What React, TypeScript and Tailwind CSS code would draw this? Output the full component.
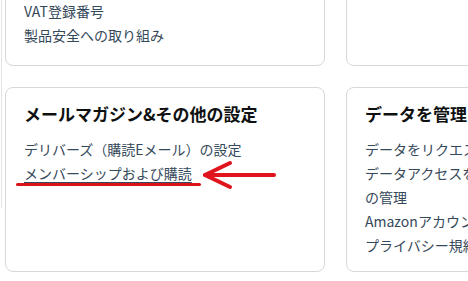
const font = {
  fontFamily: '"Noto Sans CJK JP", "Noto Sans", sans-serif',
};

const Card = ({
  title,
  items,
  className,
  children,
}: {
  title?: string;
  items: string[];
  className?: string;
  children?: React.ReactNode;
}) => {
  return (
    <div
      className={
        "relative rounded-lg border border-[#d5d9d9] bg-white px-[18px] " +
        (className ?? "")
      }
    >
      {title && (
        <h2 className="mb-[11px] text-[17px] font-bold leading-6 text-[#0f1111]">
          {title}
        </h2>
      )}
      <ul className="text-[14px] leading-6 text-[#35495a]">
        {items.map((item) => (
          <li key={item} className="cursor-pointer">
            {item}
          </li>
        ))}
      </ul>
      {children}
    </div>
  );
};

const App = () => {
  return (
    <div
      className="h-[281px] w-[468px] overflow-hidden bg-white"
      style={font}
    >
      <div className="ml-[1px] h-full border-l border-[#e3e3e3] pl-[3px]">
        <div className="-mt-[73px] grid w-[600px] grid-cols-[320px_320px] gap-x-[21px] gap-y-[21px]">
          <Card
            className="h-[139px] pt-[71px]"
            items={["VAT登録番号", "製品安全への取り組み"]}
          />
          <Card className="h-[139px]" items={[]} />

          <Card
            className="h-[185px] pt-[14px]"
            title="メールマガジン&その他の設定"
            items={[]}
          >
            <ul className="text-[14px] leading-6 text-[#35495a]">
              <li>デリバーズ（購読Eメール）の設定</li>
              <li>
                <span className="underline decoration-[#35495a] underline-offset-[3px]">
                  メンバーシップおよび購読
                </span>
              </li>
            </ul>
            {/* red annotation */}
            <div className="absolute left-[10px] top-[95px] h-[3px] w-[185px] rounded-full bg-[#d9141a]" />
            <svg
              className="absolute left-[194px] top-[72px]"
              width="76"
              height="30"
              viewBox="0 0 76 30"
            >
              <g
                stroke="#e0141c"
                strokeWidth="4"
                strokeLinecap="round"
                strokeLinejoin="round"
                fill="none"
              >
                <path d="M5 15 H74" />
                <path d="M30 3 L5 15 L30 27" />
              </g>
            </svg>
          </Card>
          <Card
            className="h-[185px] pt-[14px]"
            title="データを管理する"
            items={[
              "データをリクエストする",
              "データアクセスを許可したアプリとサービスの管理",
              "Amazonアカウントの閉鎖",
              "プライバシー規約",
            ]}
          />
        </div>
      </div>
    </div>
  );
};

export default App;
